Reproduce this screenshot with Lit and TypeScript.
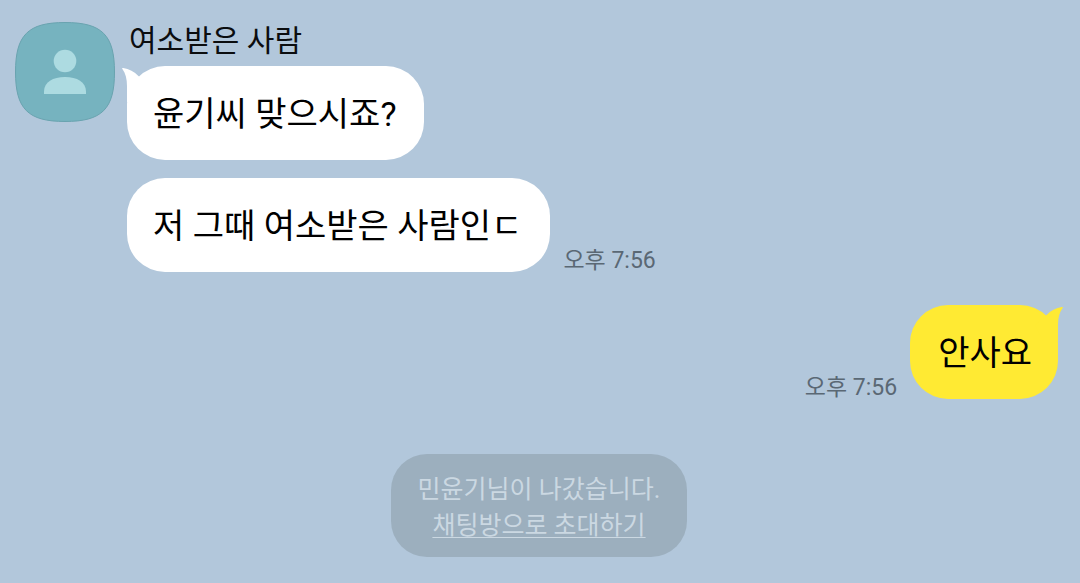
import { LitElement, html, css, svg } from "lit";
import { customElement, property } from "lit/decorators.js";

@customElement("chat-bubble")
class ChatBubble extends LitElement {
  @property({ type: Boolean, reflect: true }) mine = false;
  @property({ type: Boolean }) tail = false;

  static styles = css`
    :host {
      display: block;
      position: relative;
      box-sizing: border-box;
      padding: 25px 28px 23px 26px;
      border-radius: 38px;
      background: #fff;
      color: #000;
      font-size: 34px;
      line-height: 46px;
    }
    :host([mine]) {
      padding: 25px 26px 23px 28px;
      background: #ffea33;
    }
    .tail {
      position: absolute;
      top: 0;
      left: -5px;
      width: 30px;
      height: 36px;
      fill: #fff;
    }
    :host([mine]) .tail {
      left: auto;
      right: -5px;
      transform: scaleX(-1);
      fill: #ffea33;
    }
  `;

  render() {
    return html`${this.tail
        ? svg`<svg class="tail" viewBox="0 0 30 36" aria-hidden="true">
            <path d="M0.4 3C-0.2 2.2 0.4 1.8 1.2 2C7 2.8 12.4 5.6 16.4 10L28 20L20 36H5V20C5 13 3.6 7.4 0.4 3Z" />
          </svg>`
        : null}<slot></slot>`;
  }
}

@customElement("chat-avatar")
class ChatAvatar extends LitElement {
  static styles = css`
    :host {
      display: block;
      width: 100px;
      height: 100px;
    }
    .picture {
      display: block;
      width: 100%;
      height: 100%;
    }
    .tile {
      fill: #76b3bf;
      stroke: #69a3af;
      stroke-width: 1;
    }
    .person {
      fill: #addbe1;
    }
  `;

  render() {
    return html`<svg class="picture" viewBox="0 0 100 100" aria-hidden="true">
      <path
        class="tile"
        d="M50 0.5C87 0.5 99.5 13 99.5 50C99.5 87 87 99.5 50 99.5C13 99.5 0.5 87 0.5 50C0.5 13 13 0.5 50 0.5Z"
      />
      <circle class="person" cx="50" cy="39" r="11.3" />
      <path class="person" d="M29 72V69.5C29 60 38 55 50 55C62 55 71 60 71 69.5V72Z" />
    </svg>`;
  }
}

@customElement("app-root")
class AppRoot extends LitElement {
  static styles = css`
    :host {
      display: block;
      box-sizing: border-box;
      min-height: 100vh;
      padding: 18px 17px 26px 15px;
      background: #b2c7db;
      font-family: Roboto, "Noto Sans CJK KR", sans-serif;
    }
    .received {
      display: flex;
      align-items: flex-start;
      gap: 12px;
    }
    .avatar {
      flex: none;
      margin-top: 4px;
    }
    .messages {
      display: flex;
      flex-direction: column;
      align-items: flex-start;
      gap: 18px;
    }
    .sender {
      margin: 0 2px -16px;
      font-size: 30px;
      font-weight: 400;
      line-height: 46px;
      color: #0b0d0f;
    }
    .row {
      display: flex;
      align-items: flex-end;
      gap: 13px;
    }
    .sent {
      justify-content: flex-end;
      margin: 33px 5px 0 0;
    }
    .time {
      font-size: 23px;
      line-height: 22px;
      color: #5a6874;
    }
    .notice {
      width: fit-content;
      box-sizing: border-box;
      margin: 55px auto 0;
      padding: 18px 27px 13px;
      border-radius: 36px;
      background: #9cafbe;
      color: #cbd8e2;
      font-size: 25px;
      line-height: 36px;
      text-align: center;
    }
    .line {
      margin: 0;
    }
    .invite {
      color: inherit;
      text-decoration: underline;
      text-decoration-thickness: 1px;
      text-underline-offset: 3px;
      text-decoration-skip-ink: none;
    }
  `;

  render() {
    return html`
      <section class="received">
        <chat-avatar class="avatar"></chat-avatar>
        <div class="messages">
          <h2 class="sender">여소받은 사람</h2>
          <chat-bubble tail>윤기씨 맞으시죠?</chat-bubble>
          <div class="row">
            <chat-bubble>저 그때 여소받은 사람인ㄷ</chat-bubble>
            <time class="time" datetime="19:56">오후 7:56</time>
          </div>
        </div>
      </section>
      <section class="row sent">
        <time class="time" datetime="19:56">오후 7:56</time>
        <chat-bubble mine tail>안사요</chat-bubble>
      </section>
      <section class="notice">
        <p class="line">민윤기님이 나갔습니다.</p>
        <p class="line"><a class="invite" href="#invite">채팅방으로 초대하기</a></p>
      </section>
    `;
  }
}
